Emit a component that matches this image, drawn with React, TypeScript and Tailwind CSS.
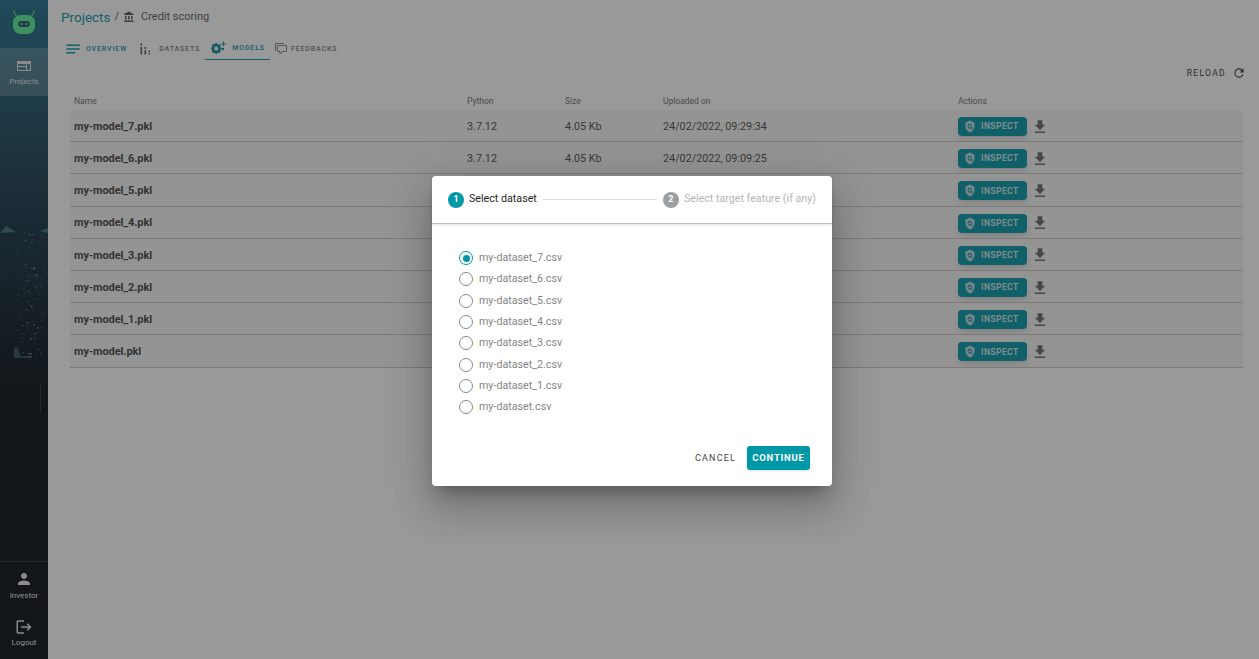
import { MdLogout, MdNotes, MdPerson } from "react-icons/md";

const font = { fontFamily: "Roboto, sans-serif" };

// only the first two rows show their cells, the dialog covers the others
const models = [
  { name: "my-model_7.pkl", python: "3.7.12", size: "4.05 Kb", date: "24/02/2022, 09:29:34" },
  { name: "my-model_6.pkl", python: "3.7.12", size: "4.05 Kb", date: "24/02/2022, 09:09:25" },
  { name: "my-model_5.pkl" },
  { name: "my-model_4.pkl" },
  { name: "my-model_3.pkl" },
  { name: "my-model_2.pkl" },
  { name: "my-model_1.pkl" },
  { name: "my-model.pkl" },
];

const datasets = [
  "my-dataset_7.csv",
  "my-dataset_6.csv",
  "my-dataset_5.csv",
  "my-dataset_4.csv",
  "my-dataset_3.csv",
  "my-dataset_2.csv",
  "my-dataset_1.csv",
  "my-dataset.csv",
];

// city lights of the sidebar photo
function CityLights() {
  const dots: { x: number; y: number; o: number; c: string }[] = [];
  let seed = 11;
  const rnd = () => {
    seed = (seed * 16807) % 2147483647;
    return seed / 2147483647;
  };
  for (let i = 0; i < 190; i++) {
    const x = Math.floor(rnd() * 48);
    const y = 232 + Math.floor(rnd() * 125);
    const center = Math.max(0.1, 1 - Math.abs(x - 30) / 20);
    dots.push({ x, y, o: rnd() * 0.5 * center + 0.03, c: rnd() > 0.5 ? "#9fc4d6" : "#e6efe6" });
  }
  return (
    <svg width="48" height="659" className="absolute inset-0">
      <path d="M0 233 L6 226 L16 232 Z" fill="#5a9ab3" opacity="0.6" />
      <path d="M40 231 L48 228 L48 233 Z" fill="#5a9ab3" opacity="0.6" />
      <path d="M14 348 L18 348 L20 356 L32 356 V358 H14 Z" fill="#5a9ab3" opacity="0.45" />
      <rect x="40" y="385" width="1" height="28" fill="#47646f" opacity="0.4" />
      {dots.map((d, i) => (
        <rect key={i} x={d.x} y={d.y} width="1.5" height="1.5" fill={d.c} opacity={d.o} />
      ))}
      <rect x="0" y="561" width="48" height="1" fill="#ffffff" opacity="0.12" />
    </svg>
  );
}

function Logo() {
  return (
    <svg width="24" height="26" viewBox="0 0 24 26">
      <path d="M4 8 L1.5 2 M20 8 L22.5 2" stroke="#64af8a" strokeWidth="1.6" />
      <rect x="1" y="7" width="22" height="19" rx="7.5" fill="#53f094" />
      <rect x="6" y="13" width="12" height="6" rx="3" fill="#1b5c65" />
      <circle cx="9.5" cy="16" r="1" fill="#9dd4c2" />
      <circle cx="14.5" cy="16" r="1" fill="#9dd4c2" />
    </svg>
  );
}

function BarsIcon() {
  return (
    <svg width="11" height="12" viewBox="0 0 11 12" fill="#5d5d5d">
      <rect x="0.5" y="0.5" width="1.6" height="2" />
      <rect x="0.5" y="4" width="1.6" height="7.5" />
      <rect x="4.5" y="4" width="1.6" height="2" />
      <rect x="4.5" y="7" width="1.6" height="4.5" />
      <rect x="8.5" y="7.5" width="1.6" height="1.5" />
      <rect x="8.5" y="10" width="1.6" height="1.5" />
    </svg>
  );
}

function CogsIcon() {
  return (
    <svg width="16" height="15" viewBox="0 0 16 15" fill="#0f8f9c">
      <path d="M6 3.2 L7.6 3.6 L8.6 2.9 L9.8 4.1 L9.1 5.1 L9.6 6.4 L10.8 6.7 V8.3 L9.6 8.6 L9.1 9.9 L9.8 10.9 L8.6 12.1 L7.6 11.4 L6.3 11.9 L6 13.1 H4.4 L4.1 11.9 L2.8 11.4 L1.8 12.1 L0.6 10.9 L1.3 9.9 L0.8 8.6 L0 8.3 V6.7 L0.8 6.4 L1.3 5.1 L0.6 4.1 L1.8 2.9 L2.8 3.6 L4.1 3.1 L4.4 2 H6 Z M5.2 5.6 A1.9 1.9 0 1 0 5.2 9.4 A1.9 1.9 0 1 0 5.2 5.6 Z" fillRule="evenodd" />
      <path d="M12 0.5 H13 V2.4 H15 V3.4 H13 V5.3 H12 V3.4 H10 V2.4 H12 Z" />
      <circle cx="12" cy="8" r="1.2" />
    </svg>
  );
}

function CommentsIcon() {
  return (
    <svg width="12" height="12" viewBox="0 0 12 12" fill="none" stroke="#777777" strokeWidth="0.9">
      <path d="M0.5 8 V0.5 H9" />
      <path d="M2.5 2.5 H11.5 V8.5 H7 L5 11 V8.5 H2.5 Z" />
    </svg>
  );
}

function ProjectsIcon() {
  return (
    <svg width="14" height="10" viewBox="0 0 14 10">
      <path fillRule="evenodd" d="M0 0 H14 V10 H0 Z M1 3 V9 H9 V6 H1 Z M10 3 V9 H13 V3 Z M1 3 H9 V5 H1 Z" fill="#e4e7e8" />
    </svg>
  );
}

function ShieldSearch() {
  return (
    <svg width="12" height="13" viewBox="0 0 24 24" preserveAspectRatio="none">
      <path
        fillRule="evenodd"
        fill="#c5dcde"
        d="M12 1 L21 5 V11 C21 16.5 17.2 21.7 12 23 C6.8 21.7 3 16.5 3 11 V5 Z M11.5 7 A4.5 4.5 0 1 0 11.5 16 A4.5 4.5 0 0 0 14 15.2 L16.5 17.7 L17.9 16.3 L15.4 13.8 A4.5 4.5 0 0 0 11.5 7 Z M11.5 9 A2.5 2.5 0 1 1 11.5 14 A2.5 2.5 0 1 1 11.5 9 Z"
      />
    </svg>
  );
}

function DownloadIcon() {
  return (
    <svg width="18" height="18" viewBox="0 0 24 24" fill="#666666">
      <path d="M5,20H19V18H5M19,9H15V3H9V9H5L12,16L19,9Z" />
    </svg>
  );
}

function Sidebar() {
  return (
    <aside className="relative w-12 h-[659px] shrink-0 flex flex-col overflow-hidden bg-gradient-to-b from-[#1f6f8c] via-[#17384a] via-30% to-[#060e14] to-60%">
      <CityLights />
      <div className="relative h-12 pt-2 flex items-start justify-center">
        <Logo />
      </div>
      <div className="relative h-12 pt-[5px] flex flex-col items-center justify-center bg-white/20">
        <ProjectsIcon />
        <span className="text-[8px] leading-3 mt-[5px] text-[#e4e7e8]">Projects</span>
      </div>
      <div className="flex-1" />
      <div className="relative h-[46px] flex flex-col items-center justify-center">
        <MdPerson className="w-[18px] h-[18px] text-[#e4e7e8]" />
        <span className="text-[8px] leading-3 mt-[2px] text-[#e4e7e8]">Investor</span>
      </div>
      <div className="relative h-[46px] mb-[3px] mt-[1px] flex flex-col items-center justify-center">
        <MdLogout className="w-[18px] h-[18px] text-[#e4e7e8]" />
        <span className="text-[8px] leading-3 mt-[1px] text-[#e4e7e8]">Logout</span>
      </div>
    </aside>
  );
}

function TabLabel({ label, active }: { label: string; active?: boolean }) {
  return (
    <span className={`text-[7px] font-medium tracking-[0.125em] ${active ? "text-[#0097a7]" : "text-[#777777]"}`}>{label}</span>
  );
}

function Tabs() {
  return (
    <div className="flex items-center h-[26px] ml-[3px] mt-[8px]">
      <div className="flex items-center gap-1">
        <MdNotes className="w-[18px] h-[18px] text-[#0097a7]" />
        <TabLabel label="OVERVIEW" active />
      </div>
      <div className="flex items-center gap-[8px] ml-[13px]">
        <BarsIcon />
        <TabLabel label="DATASETS" />
      </div>
      <div className="flex items-center h-[22px] gap-[5px] ml-[5px] pl-[6px] pr-[5px] border-b border-[#0097a7]">
        <CogsIcon />
        <TabLabel label="MODELS" active />
      </div>
      <div className="flex items-center gap-1 ml-[5px]">
        <CommentsIcon />
        <TabLabel label="FEEDBACKS" />
      </div>
    </div>
  );
}

function Row({ model }: { model: (typeof models)[number] }) {
  return (
    <div className="h-[32.2px] grid grid-cols-[393px_98px_98px_295px_1fr] items-center pl-1 bg-[#f5f5f5] border-b border-[#c8c8c8] text-[10.8px] text-[#4d4d4d]">
      <span className="text-[11px] font-bold tracking-[-0.01em] text-[#444444] pt-[3px]">{model.name}</span>
      <span className="pt-[3px]">{model.python}</span>
      <span className="pt-[3px]">{model.size}</span>
      <span className="pt-[3px]">{model.date}</span>
      <div className="flex items-center gap-1 pt-[2px]">
        <div className="w-[69px] h-[19px] rounded-sm flex items-center pl-[6px] gap-[5px] bg-[#0097a7] shadow-md">
          <ShieldSearch />
          <span className="text-[8.5px] font-bold tracking-[0.05em] text-[#d4e8ea]">INSPECT</span>
        </div>
        <DownloadIcon />
      </div>
    </div>
  );
}

function Dialog() {
  return (
    <div className="w-[400px] h-[310px] rounded bg-white flex flex-col shadow-[0_11px_15px_-7px_rgba(0,0,0,0.3),0_24px_38px_3px_rgba(0,0,0,0.14),0_9px_46px_8px_rgba(0,0,0,0.12)]">
      <div className="h-12 shrink-0 flex items-center pl-4 pr-4 border-b border-[#bdbdbd] shadow-[0_1px_2px_rgba(0,0,0,0.12)]">
        <span className="w-4 h-4 rounded-full bg-[#0097a7] text-white text-[9px] font-bold flex items-center justify-center">1</span>
        <span className="ml-[5px] text-[10.7px] text-[#1f1f1f]">Select dataset</span>
        <span className="mx-[6px] flex-1 h-px bg-[#dcdcdc]" />
        <span className="w-4 h-4 rounded-full bg-[#9e9e9e] text-white text-[9px] font-bold flex items-center justify-center">2</span>
        <span className="ml-[5px] text-[10.7px] text-[#b5b5b5]">Select target feature (if any)</span>
      </div>
      <div className="pt-[23.5px] pl-[27px] flex flex-col">
        {datasets.map((d, i) => (
          <div key={d} className="h-[21.3px] flex items-center gap-[6px]">
            <span className={`w-[14px] h-[14px] rounded-full border-[1.5px] flex items-center justify-center ${i === 0 ? "border-[#0097a7]" : "border-[#8a8a8a]"}`}>
              {i === 0 && <span className="w-[7px] h-[7px] rounded-full bg-[#0097a7]" />}
            </span>
            <span className="text-[10.7px] text-[#858585]">{d}</span>
          </div>
        ))}
      </div>
      <div className="mt-auto pb-[16px] pr-[22px] flex justify-end items-center gap-[11px]">
        <span className="text-[9px] pt-px tracking-[0.13em] text-[#444444]">CANCEL</span>
        <div className="w-[63px] h-6 pt-px rounded-[3px] bg-[#0097a7] shadow flex items-center justify-center text-[9.5px] font-bold tracking-[0.08em] text-white">
          CONTINUE
        </div>
      </div>
    </div>
  );
}

export default function App() {
  return (
    <div className="relative w-[1259px] h-[659px] overflow-hidden flex bg-white" style={font}>
      <Sidebar />
      <main className="flex-1 flex flex-col pl-[13px] pr-[13px]">
        <div className="h-[28px] pt-[6px] flex items-center">
          <span className="text-[13.5px] text-[#0097a7]">Projects</span>
          <span className="mx-1 text-[11px] text-[#555555]">/</span>
          <svg width="12" height="12" viewBox="0 0 24 24" fill="#555555">
            <path d="M11.5,1L2,6V8H21V6M16,10V17H19V10M2,22H21V19H2M10,10V17H13V10M4,10V17H7V10H4Z" />
          </svg>
          <span className="ml-[6px] pt-px text-[11px] text-[#5a5a5a]">Credit scoring</span>
        </div>
        <Tabs />
        <div className="mt-[4px] h-[14px] flex items-center justify-end gap-[6px] text-[8.6px] tracking-[0.15em] text-[#3a3a3a]">
          RELOAD
          <svg width="14" height="14" viewBox="0 0 24 24" fill="#3a3a3a">
            <path d="M17.65,6.35C16.2,4.9 14.21,4 12,4A8,8 0 0,0 4,12A8,8 0 0,0 12,20C15.73,20 18.84,17.45 19.73,14H17.65C16.83,16.33 14.61,18 12,18A6,6 0 0,1 6,12A6,6 0 0,1 12,6C13.66,6 15.14,6.69 16.22,7.78L13,11H20V4L17.65,6.35Z" />
          </svg>
        </div>
        <div className="ml-[9px] mr-[3px] mt-[14px] grid grid-cols-[393px_98px_98px_295px_1fr] h-[14px] items-center pl-1 text-[8.5px] text-[#6e6e6e]">
          <span>Name</span>
          <span>Python</span>
          <span>Size</span>
          <span>Uploaded on</span>
          <span>Actions</span>
        </div>
        <div className="ml-[9px] mr-[3px] mt-[2px] flex flex-col">
          {models.map((m) => (
            <Row key={m.name} model={m} />
          ))}
        </div>
      </main>
      {/* dialog overlay */}
      <div className="absolute inset-0 bg-[#212121]/[0.46]" />
      <div className="absolute left-[432px] top-[176px]">
        <Dialog />
      </div>
    </div>
  );
}
